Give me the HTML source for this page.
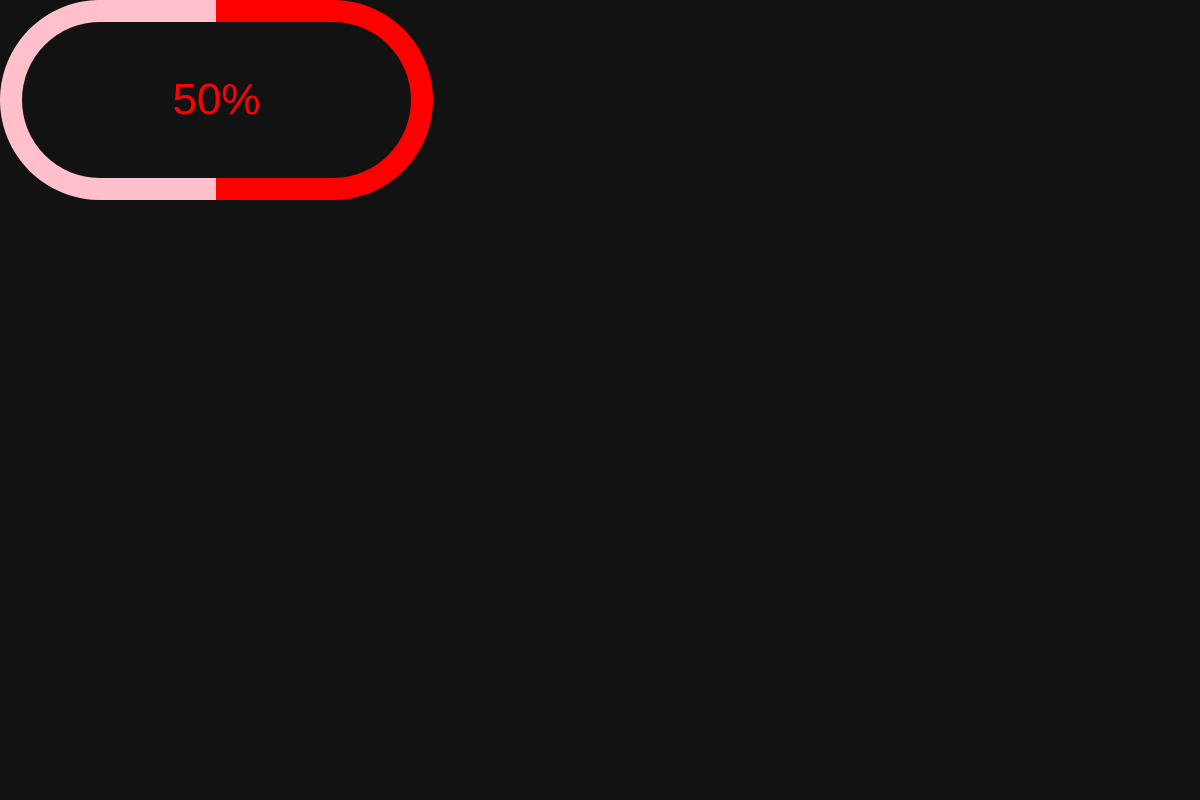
<!DOCTYPE html>
<html><head><style>
html,body{margin:0;padding:0;background:#121212;width:1200px;height:800px;overflow:hidden}
.o{position:absolute;left:0;top:0;width:433px;height:200px;border-radius:100px;background:linear-gradient(to right,#ffc0cb 0,#ffc0cb 216px,#f00 216px,#f00 100%)}
.i{position:absolute;left:22px;top:22px;width:389px;height:156px;border-radius:78px;background:#121212;display:flex;align-items:center;justify-content:center;color:#f00;font:44px "Liberation Sans",sans-serif}
</style></head><body>
<div class="o"><div class="i">50%</div></div>
</body></html>
